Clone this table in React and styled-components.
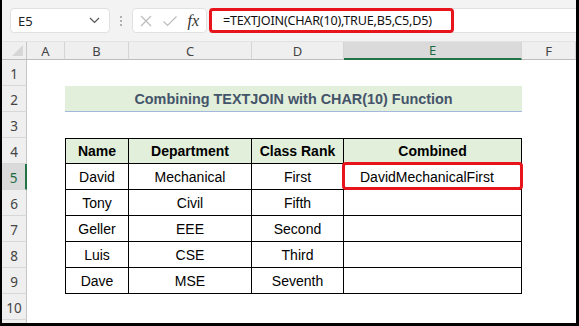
import React from 'react';
import styled, { createGlobalStyle } from 'styled-components';

const GlobalStyle = createGlobalStyle`
  html, body { margin: 0; padding: 0; background: #fff; }
  * { box-sizing: border-box; }
`;

const Frame = styled.div`
  width: 579px;
  height: 326px;
  display: flex;
  flex-direction: column;
  border-left: 2px solid #000;
  border-right: 3px solid #000;
  border-bottom: 3px solid #000;
  background: #fff;
  font-family: 'Liberation Sans', Arial, sans-serif;
  overflow: hidden;
`;

const TopBar = styled.div`
  height: 42px;
  flex: none;
  display: flex;
  align-items: center;
  padding-left: 8px;
  background: #f3f3f3;
  border-bottom: 1px solid #e2e2e2;
`;

const NameBox = styled.div`
  width: 100px;
  height: 25px;
  display: flex;
  align-items: center;
  justify-content: space-between;
  padding: 0 9px 0 7px;
  background: #fff;
  border: 1px solid #e1e1e1;
  border-radius: 4px;
  font-family: 'Noto Sans', 'Open Sans', sans-serif;
  font-size: 13px;
  color: #222;
`;

const Dots = styled.div`
  width: 22px;
  display: flex;
  flex-direction: column;
  align-items: center;
  gap: 2px;

  span {
    width: 2px;
    height: 2px;
    border-radius: 1px;
    background: #9a9a9a;
  }
`;

const ButtonGroup = styled.div`
  width: 75px;
  height: 25px;
  display: flex;
  align-items: center;
  justify-content: space-between;
  padding: 0 6px 0 6px;
  background: #fff;
  border: 1px solid #e1e1e1;
  border-radius: 4px;
`;

const Fx = styled.span`
  font-family: 'Liberation Serif', 'Times New Roman', serif;
  font-style: italic;
  font-size: 16px;
  color: #333;
  padding-right: 1px;
`;

const FormulaField = styled.div`
  flex: 1;
  height: 25px;
  margin-left: 2px;
  display: flex;
  align-items: stretch;
  background: #fff;
  border-top: 1px solid #e1e1e1;
  border-bottom: 1px solid #e1e1e1;
`;

const FormulaText = styled.div`
  width: 245px;
  display: flex;
  align-items: center;
  padding-left: 11px;
  margin-top: -1px;
  margin-bottom: -1px;
  border: 3px solid #e8141c;
  border-radius: 4px;
  font-family: 'Noto Sans', 'Open Sans', sans-serif;
  font-size: 12.6px;
  letter-spacing: -0.2px;
  color: #111;
  white-space: nowrap;
`;

const Sheet = styled.div`
  flex: 1;
  display: grid;
  grid-template-columns: 25px 38px 64px 123px 92px 178px 1fr;
  grid-template-rows: 18px repeat(10, 26px) 1fr;
`;

const HeaderCell = styled.div`
  display: flex;
  align-items: center;
  justify-content: center;
  background: ${(p) => (p.$active ? '#dadada' : '#efefef')};
  color: ${(p) => (p.$active ? '#1e6b41' : '#444')};
  font-family: 'Noto Sans', 'Open Sans', sans-serif;
  font-size: 13px;
  border-right: 1px solid #d5d5d5;
  border-bottom: ${(p) => (p.$active ? '2px solid #217346' : '1px solid #bdbdbd')};
`;

const Corner = styled.div`
  position: relative;
  background: #efefef;
  border-right: 1px solid #c6c6c6;
  border-bottom: 1px solid #bdbdbd;

  &::after {
    content: '';
    position: absolute;
    right: 3px;
    bottom: 3px;
    border-style: solid;
    border-width: 0 0 11px 11px;
    border-color: transparent transparent #d6d6d6 transparent;
  }
`;

const RowHeader = styled.div`
  display: flex;
  align-items: center;
  justify-content: center;
  padding-top: 3px;
  background: ${(p) => (p.$active ? '#dadada' : '#efefef')};
  color: ${(p) => (p.$active ? '#1e6b41' : '#444')};
  font-family: 'Noto Sans', 'Open Sans', sans-serif;
  font-size: 13.5px;
  border-bottom: 1px solid #d8d8d8;
  border-right: ${(p) => (p.$active ? '2px solid #217346' : '1px solid #c6c6c6')};
`;

const Blank = styled.div`
  background: #fff;
`;

const Title = styled.div`
  grid-column: span 4;
  display: flex;
  align-items: center;
  justify-content: center;
  background: #e2efda;
  border-bottom: 3px solid #a4b7df;
  margin-bottom: -2px;
  color: #44546a;
  font-weight: 700;
  font-size: 14.4px;
  padding-top: 1px;
`;

const TableCell = styled.div`
  position: relative;
  display: flex;
  align-items: center;
  justify-content: ${(p) => (p.$left ? 'flex-start' : 'center')};
  padding-left: ${(p) => (p.$left ? '16px' : '0')};
  background: ${(p) => (p.$head ? '#e2efda' : '#fff')};
  font-weight: ${(p) => (p.$head ? 700 : 400)};
  font-size: 14px;
  color: #000;
  border-right: 1px solid #000;
  border-bottom: 1px solid #000;
  border-top: ${(p) => (p.$head ? '1px solid #000' : 'none')};
  border-left: ${(p) => (p.$first ? '1px solid #000' : 'none')};
  white-space: nowrap;
`;

const RedOutline = styled.div`
  position: absolute;
  left: -2px;
  right: -2px;
  top: -2px;
  bottom: -1px;
  border: 3px solid #e8141c;
  border-radius: 4px;
`;

const CloseIcon = () => (
  <svg width="14" height="14" viewBox="0 0 14 14">
    <path d="M2 2 L12 12 M12 2 L2 12" stroke="#bcbcbc" strokeWidth="1.2" fill="none" />
  </svg>
);

const CheckIcon = () => (
  <svg width="16" height="14" viewBox="0 0 16 14">
    <path d="M1.5 7.5 L5.5 11.5 L14.5 2.5" stroke="#bcbcbc" strokeWidth="1.2" fill="none" />
  </svg>
);

const Chevron = () => (
  <svg width="11" height="7" viewBox="0 0 11 7">
    <path d="M1 1 L5.5 5.5 L10 1" stroke="#555" strokeWidth="1.2" fill="none" />
  </svg>
);

const columns = ['A', 'B', 'C', 'D', 'E', 'F'];

const people = [
  ['David', 'Mechanical', 'First'],
  ['Tony', 'Civil', 'Fifth'],
  ['Geller', 'EEE', 'Second'],
  ['Luis', 'CSE', 'Third'],
  ['Dave', 'MSE', 'Seventh'],
];

const renderRow = (n) => {
  const cells = [
    <RowHeader key={`h${n}`} $active={n === 5}>
      {n}
    </RowHeader>,
  ];

  if (n === 2) {
    cells.push(<Blank key="a2" />);
    cells.push(<Title key="t">Combining TEXTJOIN with CHAR(10) Function</Title>);
    cells.push(<Blank key="f2" />);
    return cells;
  }

  if (n === 4) {
    cells.push(<Blank key="a4" />);
    ['Name', 'Department', 'Class Rank', 'Combined'].forEach((h, i) => {
      cells.push(
        <TableCell key={h} $head $first={i === 0}>
          {h}
        </TableCell>
      );
    });
    cells.push(<Blank key="f4" />);
    return cells;
  }

  if (n >= 5 && n <= 9) {
    const row = people[n - 5];
    cells.push(<Blank key={`a${n}`} />);
    row.forEach((v, i) => {
      cells.push(
        <TableCell key={`${n}-${i}`} $first={i === 0}>
          {v}
        </TableCell>
      );
    });
    cells.push(
      <TableCell key={`e${n}`} $left>
        {n === 5 && 'DavidMechanicalFirst'}
        {n === 5 && <RedOutline />}
      </TableCell>
    );
    cells.push(<Blank key={`f${n}`} />);
    return cells;
  }

  columns.forEach((c) => cells.push(<Blank key={`${c}${n}`} />));
  return cells;
};

const App = () => {
  return (
    <>
      <GlobalStyle />
      <Frame>
        <TopBar>
          <NameBox>
            E5
            <Chevron />
          </NameBox>
          <Dots>
            <span />
            <span />
            <span />
          </Dots>
          <ButtonGroup>
            <CloseIcon />
            <CheckIcon />
            <Fx>fx</Fx>
          </ButtonGroup>
          <FormulaField>
            <FormulaText>=TEXTJOIN(CHAR(10),TRUE,B5,C5,D5)</FormulaText>
          </FormulaField>
        </TopBar>
        <Sheet>
          <Corner />
          {columns.map((c) => (
            <HeaderCell key={c} $active={c === 'E'}>
              {c}
            </HeaderCell>
          ))}
          {Array.from({ length: 10 }, (_, i) => renderRow(i + 1))}
          <RowHeader />
          {columns.map((c) => (
            <Blank key={`end${c}`} />
          ))}
        </Sheet>
      </Frame>
    </>
  );
};

export default App;
